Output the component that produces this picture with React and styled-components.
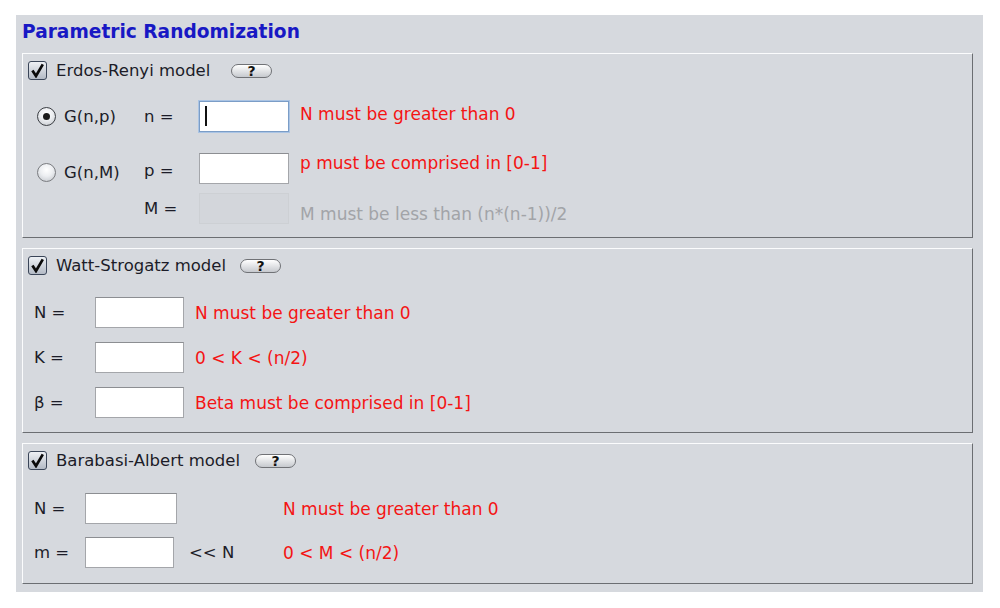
import React from 'react';
import styled, { createGlobalStyle } from 'styled-components';

const Global = createGlobalStyle`
  html, body { margin: 0; padding: 0; background: #ffffff; }
  body { font-family: "DejaVu Sans", Verdana, sans-serif; }
`;

const Panel = styled.div`
  margin: 15px 0 0 16px;
  width: 967px;
  height: 577px;
  box-sizing: border-box;
  background: #d6d9de;
  padding: 0 10px 8px 6px;
  display: flex;
  flex-direction: column;
  gap: 10px;
`;

const Title = styled.h1`
  margin: 0 0 -10px 0;
  height: 38px;
  box-sizing: border-box;
  padding-top: 6px;
  font: bold 18.6px/22px "DejaVu Sans", Verdana, sans-serif;
  color: #1818c4;
`;

const Section = styled.section`
  height: ${(p) => p.$h}px;
  box-sizing: border-box;
  border: 1px solid;
  border-color: #fbfcfd #6b6e72 #6b6e72 #fbfcfd;
  display: flex;
  flex-direction: column;
`;

const Header = styled.div`
  display: flex;
  align-items: center;
  height: 19px;
  padding: 7px 0 0 5px;
`;

const CheckBox = styled.span`
  width: 19px;
  height: 19px;
  box-sizing: border-box;
  border: 1px solid #3a4558;
  border-radius: 3px;
  background: linear-gradient(#eef1f5, #b3bac5);
  display: flex;
  align-items: center;
  justify-content: center;
  margin-right: 9px;
`;

const HeaderLabel = styled.span`
  width: ${(p) => p.$w}px;
  font-size: 16.5px;
  color: #1c1c28;
  white-space: nowrap;
`;

const HelpButton = styled.button`
  width: 41px;
  height: 14px;
  padding: 0;
  border: 1px solid #707276;
  border-radius: 7px;
  background: linear-gradient(#ffffff, #c6c9ce);
  font-family: "DejaVu Sans", sans-serif;
  font-weight: bold;
  font-size: 14px;
  line-height: 12px;
  color: #111;
  display: flex;
  align-items: center;
  justify-content: center;
  overflow: visible;
`;

const Body = styled.div`
  display: flex;
  flex-direction: column;
  padding-top: ${(p) => p.$pt}px;
`;

const Row = styled.div`
  display: flex;
  align-items: center;
  height: 31px;
  margin-top: ${(p) => p.$mt || 0}px;
`;

const Lead = styled.div`
  width: 121px;
  box-sizing: border-box;
  padding-left: 14px;
  display: flex;
  align-items: center;
  gap: 8px;
  margin-top: ${(p) => Math.max(0, (p.$shift || 0) * 2)}px;
  margin-bottom: ${(p) => Math.max(0, -(p.$shift || 0) * 2)}px;
`;

const Radio = styled.span`
  width: 19px;
  height: 19px;
  box-sizing: border-box;
  border-radius: 50%;
  border: 1px solid ${(p) => (p.$on ? '#3c3f44' : '#7a7c80')};
  background: radial-gradient(circle at 50% 35%, #ffffff 0%, #eceef1 45%, #bfc3c9 100%);
  display: flex;
  align-items: center;
  justify-content: center;
  &::after {
    content: '';
    width: 7px;
    height: 7px;
    border-radius: 50%;
    background: #1a1a1a;
    display: ${(p) => (p.$on ? 'block' : 'none')};
  }
`;

const Text = styled.span`
  font-size: 16.5px;
  color: ${(p) => (p.$muted ? '#9c9ea2' : '#1c1c28')};
  white-space: nowrap;
`;

const Eq = styled.span`
  width: ${(p) => p.$w}px;
  box-sizing: border-box;
  padding-left: ${(p) => p.$pl || 0}px;
  font-size: 16.5px;
  color: #1c1c28;
  white-space: nowrap;
  margin-top: ${(p) => Math.max(0, (p.$shift || 0) * 2)}px;
  margin-bottom: ${(p) => Math.max(0, -(p.$shift || 0) * 2)}px;
`;

const InputWrap = styled.div`
  position: relative;
  display: flex;
  &::after {
    content: '';
    display: ${(p) => (p.$caret ? 'block' : 'none')};
    position: absolute;
    left: 6px;
    top: 5px;
    width: 2px;
    height: 20px;
    background: #111;
  }
`;

const Input = styled.input`
  width: ${(p) => p.$w}px;
  height: 31px;
  box-sizing: border-box;
  margin: 0;
  padding: 0 6px;
  font: 16px "DejaVu Sans", sans-serif;
  outline: none;
  border: 1px solid ${(p) => (p.$focus ? '#7b9dc7' : '#a4a6aa')};
  border-top-color: ${(p) => (p.$focus ? '#7b9dc7' : '#8c8e92')};
  box-shadow: ${(p) => (p.$focus ? '0 0 0 1px #aac4e4' : 'none')};
  background: ${(p) => (p.disabled ? '#d3d6db' : '#ffffff')};
  ${(p) => (p.disabled ? 'border-color: #cdd0d4;' : '')}
`;

const Suffix = styled.span`
  width: ${(p) => p.$w}px;
  box-sizing: border-box;
  padding-left: ${(p) => p.$pl || 0}px;
  font-size: 16.5px;
  color: #1c1c28;
  white-space: nowrap;
`;

const Msg = styled.span`
  margin-left: ${(p) => p.$ml || 0}px;
  font-size: 17px;
  color: ${(p) => (p.$muted ? '#a2a4a8' : '#f41414')};
  white-space: nowrap;
  margin-top: ${(p) => Math.max(0, (p.$shift || 0) * 2)}px;
  margin-bottom: ${(p) => Math.max(0, -(p.$shift || 0) * 2)}px;
`;

const Check = () => (
  <svg width="15" height="15" viewBox="0 0 15 15">
    <path d="M2.4 7.4 L6 13 L12.8 1.4" fill="none" stroke="#0a0a0a" strokeWidth="2.7" strokeLinejoin="miter" />
  </svg>
);

const SectionHead = ({ label, w }) => (
  <Header>
    <CheckBox>
      <Check />
    </CheckBox>
    <HeaderLabel $w={w}>{label}</HeaderLabel>
    <HelpButton>?</HelpButton>
  </Header>
);

export default function App() {
  return (
    <>
      <Global />
      <Panel>
        <Title>Parametric Randomization</Title>

        <Section $h={185}>
          <SectionHead label="Erdos-Renyi model" w={175} />
          <Body $pt={21}>
            <Row>
              <Lead>
                <Radio $on />
                <Text>G(n,p)</Text>
              </Lead>
              <Eq $w={55}>n =</Eq>
              <InputWrap $caret>
                <Input $w={90} $focus readOnly />
              </InputWrap>
              <Msg $ml={11} $shift={-2.5}>N must be greater than 0</Msg>
            </Row>
            <Row $mt={21}>
              <Lead $shift={3.5}>
                <Radio />
                <Text>G(n,M)</Text>
              </Lead>
              <Eq $w={55} $shift={1.5}>p =</Eq>
              <InputWrap>
                <Input $w={90} readOnly />
              </InputWrap>
              <Msg $ml={11} $shift={-5.5}>p must be comprised in [0-1]</Msg>
            </Row>
            <Row $mt={9}>
              <Lead />
              <Eq $w={55}>M =</Eq>
              <InputWrap>
                <Input $w={90} disabled />
              </InputWrap>
              <Msg $ml={11} $muted $shift={5.5}>M must be less than (n*(n-1))/2</Msg>
            </Row>
          </Body>
        </Section>

        <Section $h={185}>
          <SectionHead label="Watt-Strogatz model" w={184} />
          <Body $pt={22}>
            <Row>
              <Eq $w={72} $pl={11}>N =</Eq>
              <InputWrap>
                <Input $w={89} readOnly />
              </InputWrap>
              <Msg $ml={11}>N must be greater than 0</Msg>
            </Row>
            <Row $mt={14}>
              <Eq $w={72} $pl={11}>K =</Eq>
              <InputWrap>
                <Input $w={89} readOnly />
              </InputWrap>
              <Msg $ml={11}>0 &lt; K &lt; (n/2)</Msg>
            </Row>
            <Row $mt={14}>
              <Eq $w={72} $pl={11}>β =</Eq>
              <InputWrap>
                <Input $w={89} readOnly />
              </InputWrap>
              <Msg $ml={11}>Beta must be comprised in [0-1]</Msg>
            </Row>
          </Body>
        </Section>

        <Section $h={141}>
          <SectionHead label="Barabasi-Albert model" w={199} />
          <Body $pt={23}>
            <Row>
              <Eq $w={62} $pl={11}>N =</Eq>
              <InputWrap>
                <Input $w={92} readOnly />
              </InputWrap>
              <Suffix $w={106} />
              <Msg>N must be greater than 0</Msg>
            </Row>
            <Row $mt={13}>
              <Eq $w={62} $pl={11}>m =</Eq>
              <InputWrap>
                <Input $w={89} readOnly />
              </InputWrap>
              <Suffix $w={109} $pl={15}>&lt;&lt; N</Suffix>
              <Msg>0 &lt; M &lt; (n/2)</Msg>
            </Row>
          </Body>
        </Section>
      </Panel>
    </>
  );
}
